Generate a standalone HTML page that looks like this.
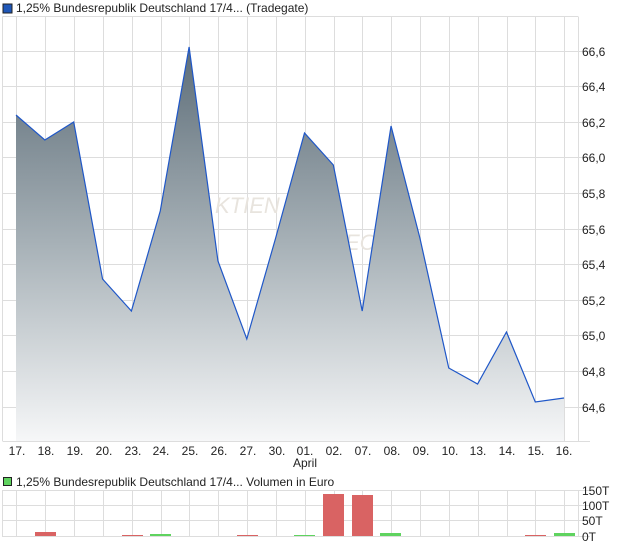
<!DOCTYPE html>
<html><head><meta charset="utf-8"><style>
html,body{margin:0;padding:0;background:#fff;}
body{width:620px;height:546px;overflow:hidden;font-family:"Liberation Sans",Arial,sans-serif;}
</style></head><body>
<svg width="620" height="546" xmlns="http://www.w3.org/2000/svg" font-family="Liberation Sans, Arial, sans-serif" font-size="12" fill="#222">
<defs>
<linearGradient id="g" x1="0" y1="47" x2="0" y2="441" gradientUnits="userSpaceOnUse">
<stop offset="0" stop-color="#5d6d78"/>
<stop offset="0.5" stop-color="#a7b1b7"/>
<stop offset="1" stop-color="#f6f7f8"/>
</linearGradient>
</defs>
<rect x="3" y="4" width="9" height="9" fill="#1f57b8" stroke="#222" stroke-width="1"/>
<text x="16" y="12">1,25% Bundesrepublik Deutschland 17/4... (Tradegate)</text>
<g stroke="#ddd" stroke-width="1">
<line x1="2.5" y1="16.5" x2="578" y2="16.5"/>
<line x1="2.5" y1="16.5" x2="2.5" y2="441"/>
<line x1="578.5" y1="16.5" x2="578.5" y2="441"/>
<line x1="2.5" y1="441.5" x2="590" y2="441.5"/>
<g id="v">
<line x1="16.5" y1="16" x2="16.5" y2="441"/><line x1="45.5" y1="16" x2="45.5" y2="441"/><line x1="74.5" y1="16" x2="74.5" y2="441"/><line x1="103.5" y1="16" x2="103.5" y2="441"/><line x1="132.5" y1="16" x2="132.5" y2="441"/><line x1="161.5" y1="16" x2="161.5" y2="441"/><line x1="189.5" y1="16" x2="189.5" y2="441"/><line x1="218.5" y1="16" x2="218.5" y2="441"/><line x1="247.5" y1="16" x2="247.5" y2="441"/><line x1="276.5" y1="16" x2="276.5" y2="441"/><line x1="305.5" y1="16" x2="305.5" y2="441"/><line x1="334.5" y1="16" x2="334.5" y2="441"/><line x1="362.5" y1="16" x2="362.5" y2="441"/><line x1="391.5" y1="16" x2="391.5" y2="441"/><line x1="420.5" y1="16" x2="420.5" y2="441"/><line x1="449.5" y1="16" x2="449.5" y2="441"/><line x1="478.5" y1="16" x2="478.5" y2="441"/><line x1="507.5" y1="16" x2="507.5" y2="441"/><line x1="535.5" y1="16" x2="535.5" y2="441"/><line x1="564.5" y1="16" x2="564.5" y2="441"/>
</g>
<line x1="2" y1="51.5" x2="590" y2="51.5"/><line x1="2" y1="86.5" x2="590" y2="86.5"/><line x1="2" y1="122.5" x2="590" y2="122.5"/><line x1="2" y1="157.5" x2="590" y2="157.5"/><line x1="2" y1="193.5" x2="590" y2="193.5"/><line x1="2" y1="229.5" x2="590" y2="229.5"/><line x1="2" y1="264.5" x2="590" y2="264.5"/><line x1="2" y1="300.5" x2="590" y2="300.5"/><line x1="2" y1="335.5" x2="590" y2="335.5"/><line x1="2" y1="371.5" x2="590" y2="371.5"/><line x1="2" y1="407.5" x2="590" y2="407.5"/>
</g>
<text x="215" y="213" font-size="22" font-style="italic" fill="#e8e4de">KTIEN</text>
<text x="345" y="250" font-size="22" font-style="italic" fill="#e8e4de">EC</text>
<path d="M16,115 L44.85,140 L73.7,122 L102.55,279 L131.4,311 L160.25,211 L189.1,47 L217.95,261 L246.8,339 L275.65,238 L304.5,133 L333.35,165 L362.2,311 L391.05,126 L419.9,238 L448.75,368 L477.6,384 L506.45,332 L535.3,402 L564,398 L564,441 L16,441 Z" fill="url(#g)"/>
<path d="M16,115 L44.85,140 L73.7,122 L102.55,279 L131.4,311 L160.25,211 L189.1,47 L217.95,261 L246.8,339 L275.65,238 L304.5,133 L333.35,165 L362.2,311 L391.05,126 L419.9,238 L448.75,368 L477.6,384 L506.45,332 L535.3,402 L564,398" fill="none" stroke="#1f57c8" stroke-width="1.2"/>
<g font-size="12">
<text x="582" y="56">66,6</text><text x="582" y="91">66,4</text><text x="582" y="127">66,2</text><text x="582" y="162">66,0</text><text x="582" y="198">65,8</text><text x="582" y="234">65,6</text><text x="582" y="269">65,4</text><text x="582" y="305">65,2</text><text x="582" y="340">65,0</text><text x="582" y="376">64,8</text><text x="582" y="412">64,6</text>
</g>
<g font-size="12" text-anchor="middle">
<text x="17" y="455">17.</text><text x="46" y="455">18.</text><text x="75" y="455">19.</text><text x="104" y="455">20.</text><text x="133" y="455">23.</text><text x="161" y="455">24.</text><text x="190" y="455">25.</text><text x="219" y="455">26.</text><text x="248" y="455">27.</text><text x="277" y="455">30.</text><text x="305" y="455">01.</text><text x="334" y="455">02.</text><text x="363" y="455">07.</text><text x="392" y="455">08.</text><text x="421" y="455">09.</text><text x="450" y="455">10.</text><text x="478" y="455">13.</text><text x="507" y="455">14.</text><text x="536" y="455">15.</text><text x="564" y="455">16.</text>
<text x="305" y="467">April</text>
</g>
<rect x="3.5" y="477.5" width="8" height="8" fill="#5fd35f" stroke="#222" stroke-width="1"/>
<text x="16" y="486">1,25% Bundesrepublik Deutschland 17/4... Volumen in Euro</text>
<g stroke="#ddd" stroke-width="1">
<line x1="2" y1="490.5" x2="590" y2="490.5"/><line x1="2" y1="505.5" x2="590" y2="505.5"/><line x1="2" y1="520.5" x2="590" y2="520.5"/><line x1="2" y1="536.5" x2="590" y2="536.5"/>
<line x1="2.5" y1="490" x2="2.5" y2="537"/><line x1="578.5" y1="490" x2="578.5" y2="537"/>
<line x1="16.5" y1="490" x2="16.5" y2="537"/><line x1="45.5" y1="490" x2="45.5" y2="537"/><line x1="74.5" y1="490" x2="74.5" y2="537"/><line x1="103.5" y1="490" x2="103.5" y2="537"/><line x1="132.5" y1="490" x2="132.5" y2="537"/><line x1="161.5" y1="490" x2="161.5" y2="537"/><line x1="189.5" y1="490" x2="189.5" y2="537"/><line x1="218.5" y1="490" x2="218.5" y2="537"/><line x1="247.5" y1="490" x2="247.5" y2="537"/><line x1="276.5" y1="490" x2="276.5" y2="537"/><line x1="305.5" y1="490" x2="305.5" y2="537"/><line x1="334.5" y1="490" x2="334.5" y2="537"/><line x1="362.5" y1="490" x2="362.5" y2="537"/><line x1="391.5" y1="490" x2="391.5" y2="537"/><line x1="420.5" y1="490" x2="420.5" y2="537"/><line x1="449.5" y1="490" x2="449.5" y2="537"/><line x1="478.5" y1="490" x2="478.5" y2="537"/><line x1="507.5" y1="490" x2="507.5" y2="537"/><line x1="535.5" y1="490" x2="535.5" y2="537"/><line x1="564.5" y1="490" x2="564.5" y2="537"/>
</g>
<g>
<rect x="35" y="532" width="21" height="4" fill="#d96363"/>
<rect x="122" y="535" width="21" height="1" fill="#d96363"/>
<rect x="150" y="534" width="21" height="2" fill="#5fd35f"/>
<rect x="237" y="535" width="21" height="1" fill="#d96363"/>
<rect x="294" y="535" width="21" height="1" fill="#5fd35f"/>
<rect x="323" y="494" width="21" height="42" fill="#d96363"/>
<rect x="352" y="495" width="21" height="41" fill="#d96363"/>
<rect x="380" y="533" width="21" height="3" fill="#5fd35f"/>
<rect x="525" y="535" width="21" height="1" fill="#d96363"/>
<rect x="554" y="533" width="21" height="3" fill="#5fd35f"/>
</g>
<g font-size="12">
<text x="582" y="495">150T</text><text x="582" y="510">100T</text><text x="582" y="525">50T</text><text x="582" y="541">0T</text>
</g>
</svg>
</body></html>
